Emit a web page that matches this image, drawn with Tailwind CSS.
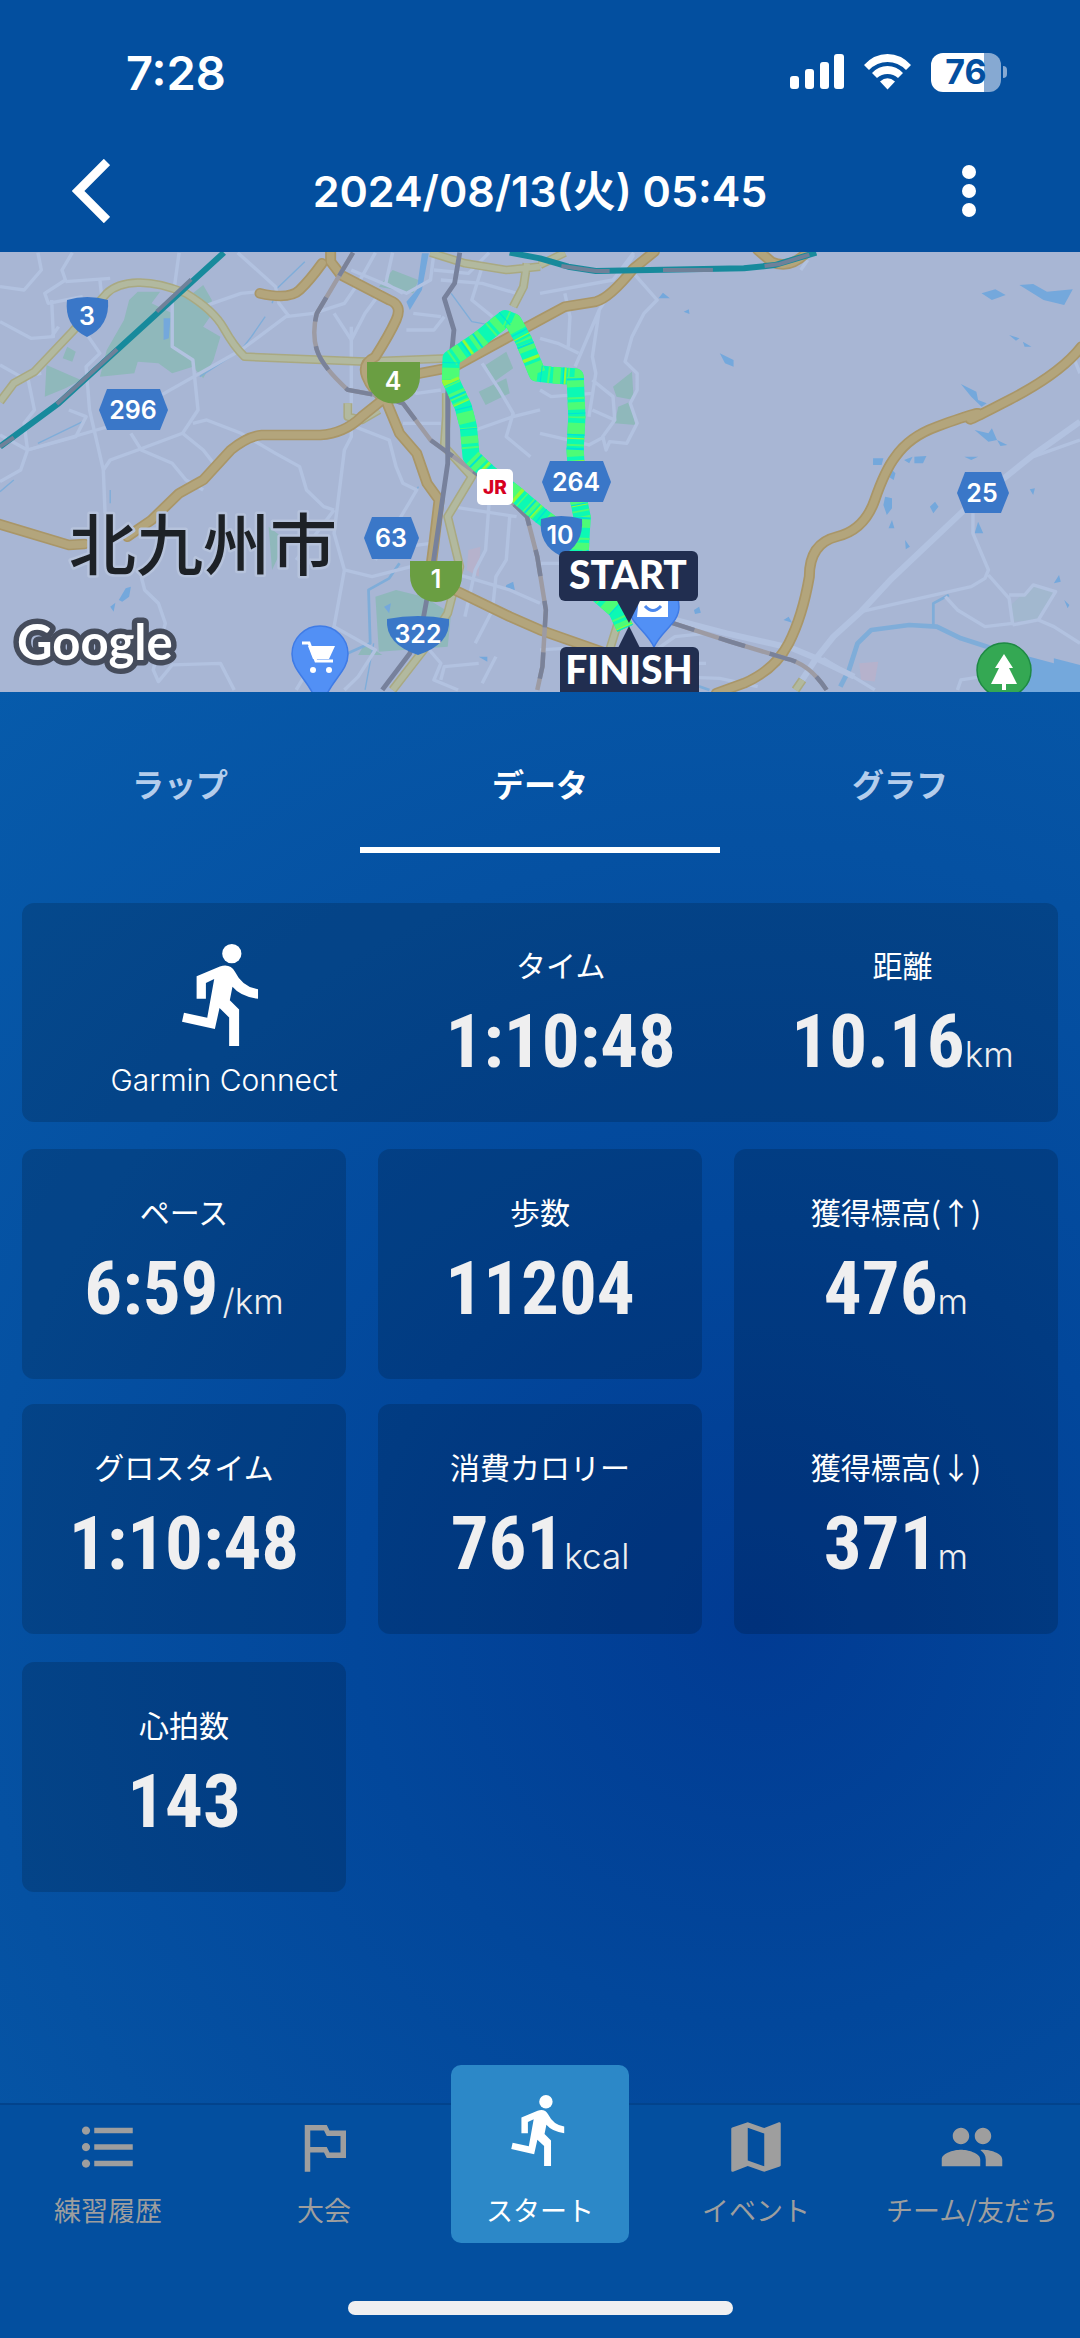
<!DOCTYPE html>
<html lang="ja">
<head>
    <meta charset="UTF-8">
    <meta name="viewport" content="width=device-width, initial-scale=1.0">
    <title>2024/08/13(火) 05:45</title>
    <script src="https://cdn.jsdelivr.net/npm/@tailwindcss/browser@4"></script>
</head>
<body class="min-h-screen flex flex-col bg-[#034f9f] text-white font-['Noto_Sans_CJK_JP',sans-serif]">

    <!-- Header -->
    <header>
        <div class="h-[144px] pl-[126px] pr-[73px] flex items-center justify-between">
            <p class="font-['Inter',sans-serif] text-[47px] leading-none font-semibold">7:28</p>
            <div class="flex items-center gap-5">
                <svg class="w-[54px] h-[36px]" viewBox="0 0 54 36" fill="#fff">
                    <rect x="0" y="22" width="9" height="13" rx="3"/>
                    <rect x="15" y="15" width="9" height="20" rx="3"/>
                    <rect x="30" y="8" width="9" height="27" rx="3"/>
                    <rect x="44" y="0" width="10" height="35" rx="3"/>
                </svg>
                <svg class="w-[47px] h-[36px]" viewBox="0 0 47 36" fill="#fff">
                    <path d="M0 11Q10 0 23.500 0T47 11L42 16Q34 8 23.500 8T5 16Z"/>
                    <path d="M8 19Q14.500 12 23.500 12T39 19L34 24Q29.500 20 23.500 20T13 24Z"/>
                    <path d="M16 27.500Q23.500 21 31 27.500L23.500 35.500Z"/>
                </svg>
                <div class="flex items-center gap-[2px]">
                    <div class="w-[70px] h-[39px] rounded-[12px] bg-[linear-gradient(90deg,#fff_76%,#86a9d2_76%)] flex items-center justify-center">
                        <span class="font-['Inter',sans-serif] text-[34px] leading-none font-bold text-[#034f9f]">76</span>
                    </div>
                    <div class="w-1 h-3 rounded-r-full bg-[#86a9d2]"></div>
                </div>
            </div>
        </div>
        <div class="h-[108px] pb-[14px] pl-[72px] pr-[104px] grid grid-cols-[38px_1fr_14px] items-center">
            <button type="button" aria-label="戻る">
                <svg class="w-[38px] h-[64px]" viewBox="0 0 38 64" fill="none" stroke="#fff" stroke-width="9"><path d="M35 3L6 32L35 61"/></svg>
            </button>
            <h1 class="font-['Inter','Noto_Sans_CJK_JP',sans-serif] text-[43px] leading-[52px] font-semibold text-center pl-2">2024/08/13(火) 05:45</h1>
            <button type="button" aria-label="メニュー">
                <svg class="w-[14px] h-[52px]" viewBox="0 0 14 52" fill="#fff"><circle cx="7" cy="7" r="7"/><circle cx="7" cy="26" r="7"/><circle cx="7" cy="45" r="7"/></svg>
            </button>
        </div>
    </header>

    <!-- Map -->
    <svg class="w-full block bg-[#a8b6d4]" viewBox="0 0 1080 440">
        <g transform="scale(.3444 .3333) translate(0 -6)" fill="none" stroke-linejoin="round">
            <!-- Parks -->
            <g fill="#8fb8bb">
                <path d="M400 125H465L440 160 500 190 510 110 560 130 590 105 615 150 610 200 590 230 640 260 620 330 590 385 560 350 500 370 460 340 400 335 390 370 290 380 310 300 360 210 375 150Z"/>
                <path d="M195 290L220 305 210 335 182 325ZM135 345L235 390 190 415 130 440ZM1140 60L1215 90 1200 130 1100 110ZM1410 345L1470 305 1490 355 1435 395ZM1390 425L1470 385 1480 430 1410 465Z"/>
                <path d="M1090 1040L1150 1020 1230 1040 1310 1090 1300 1190 1100 1205ZM1060 1180L1110 1215 1040 1215ZM780 830L830 870 790 960Z"/>
                <path d="M1780 410L1835 365 1840 450 1790 440ZM1795 470L1830 455 1845 525 1785 520Z"/>
            </g>
            <path d="M2935 1065L3000 1005 3065 1025 3015 1110 2945 1115Z" fill="#a2b8cf"/>
            <path d="M1360 900L1395 890 1390 980 1355 960ZM2495 1240L2550 1235 2540 1295 2500 1290Z" fill="#b6b2cc"/>

            <!-- Water -->
            <g fill="#74a8dc">
                <path d="M2850 130L2890 118 2920 135 2880 150ZM2960 105L3000 102 3040 125 3115 118 3090 165 3030 150ZM2930 255L2960 265 2950 272ZM2970 275L2995 290 2975 290ZM2090 310L2130 330 2130 350 2105 340ZM2790 402L2835 425 2840 450 2865 460 2850 470 2820 440ZM2830 540L2870 550 2880 535 2895 570 2870 575ZM2895 570L2925 585 2905 588ZM2800 620H2840L2820 630ZM2535 625H2565L2560 645H2535ZM2625 630L2650 620 2640 640ZM2655 620L2690 618 2680 640H2655ZM2585 655L2600 670 2595 690 2580 680ZM2570 740L2590 745 2590 775 2575 795 2565 765ZM2700 770L2715 755 2725 770 2710 790ZM2830 850L2840 815 2855 850ZM2628 870L2642 890 2630 898ZM2580 835L2590 810 2597 835ZM3060 1000L3075 975 3080 995ZM3090 1050L3105 1065 3100 1075ZM2015 1080L2030 1070 2035 1088 2018 1092ZM2275 1110L2290 1100 2300 1118ZM2990 718L3005 715 3000 735ZM1912 145L1925 128 1945 145ZM1985 185L2000 178 2002 192ZM475 205L495 205 490 265 475 270ZM345 1050L365 1015 380 1010 375 1040 355 1055ZM320 1070L335 1058 330 1085ZM1225 10H1245L1225 120 1190 180 1180 155 1210 120ZM1470 1005L1490 995 1495 1020 1468 1015ZM1390 1220L1415 1220 1415 1235ZM1115 1070L1135 1060 1130 1090Z"/>
                <path d="M2970 1215L3060 1240 3060 1225 3136 1245V1330H2960Z"/>
            </g>
            <g stroke="#7fadd9">
                <path d="M2440 1310L2465 1260 2490 1180 2530 1140 2640 1125 2720 1130 2790 1165 2880 1195" stroke-width="14"/>
                <path d="M2710 1130V1060L2755 1035M1160 940L1130 985 1070 1020 1075 1180 1010 1210M1870 1285L1990 1295 2060 1320" stroke-width="8"/>
                <path d="M885 35L805 115 790 160M770 200L730 260 700 300 580 380M1215 710L1150 830M0 725L40 690M110 580L240 515M1310 130L1370 215 1450 230M1085 1180L1060 1320M320 720V760" stroke-width="4"/>
            </g>

            <!-- Streets -->
            <g stroke="#b2c2e0" stroke-width="10">
                <path d="M0 110L70 120 120 60 110 8M210 8L180 60 190 90 130 130 140 160 240 140M190 95L320 85M150 150L155 260 90 265 0 215M150 260L170 230M0 345L60 380 120 370M80 380L100 480 70 520 80 600 60 660 0 695M0 555L80 600 220 560 250 500 200 480M240 150L250 250 290 310 250 350 260 480 300 660 305 790"/>
                <path d="M290 90L300 180M520 8L500 160V290L560 330 575 480 530 550 400 600 320 630 300 660M380 550L410 600 500 640 540 690 590 720M80 600L380 510 460 440 700 300 830 200 910 190M530 550L590 600 620 640M560 520L600 510 700 550 800 610 870 650 890 720 940 770 970 780M590 170L700 130 750 125M690 8L800 110 810 160 840 200"/>
                <path d="M1020 230V560L1000 600 970 850 1000 960 970 1130 860 1320M1000 960L1080 980 1230 940 1350 980 1480 1020 1568 1060M860 930L970 780M410 980L420 1020 460 1060 480 1120 445 1260 460 1295 500 1245 640 1240 680 1320M1030 530L1130 570 1150 650 1170 700 1210 720 1090 930M970 1130L1090 1200 1040 1280 1000 1320"/>
                <path d="M910 190L1000 160 1040 100 1090 8M970 190L1020 270 1060 190 1110 120M1020 60L1180 130 1250 90 1260 8M1140 8L1120 100 1170 130M1200 190L1280 200M1280 90L1400 100 1500 130M1260 60L1360 70 1420 8M1400 50L1370 150 1430 200M1400 340L1450 420 1490 490 1470 560 1540 620M1180 240L1260 240 1290 200M1120 330L1210 430 1280 420M1170 520L1280 520M1490 500L1380 540M1490 500L1568 480M1420 760L1410 900 1380 960 1350 1100M1480 800L1470 930 1440 980 1430 1080 1380 1180M1250 880L1180 890M1310 770L1500 800M1230 1180L1280 1240 1260 1290 1330 1320M1390 1240L1290 1250 1280 1290M1440 1220L1400 1300"/>
                <path d="M1568 130L1780 90 1840 8M1840 70L1908 150 1870 190 1835 260 1815 335 1850 370V420L1830 460 1850 520 1820 580 1770 575 1760 600 1750 560 1785 510 1780 440 1720 390M1740 180L1720 320 1730 370 1710 500M1840 15L1740 180 1670 350M1640 130L1655 200 1650 290M1568 265L1620 280 1680 310M1568 420L1600 440 1720 430M1720 480L1785 510M1568 550L1650 570 1710 585 1755 560M1568 940H1640M1568 1200L1640 1195M2390 1225L2540 1320M1890 1210L1960 1160 2050 1150M2050 1240H2010V1320M1840 1280L1950 1280 2090 1285 2200 1310"/>
                <path d="M2325 60L2345 30M3120 330L3136 370M3136 570L3000 620"/>
                <path d="M3136 515L3000 615 2800 780 2590 985 2500 1085 2420 1160 2370 1225 2310 1320M1960 1110L2110 1150 2300 1195 2370 1225 2480 1280" stroke-width="18"/>
                <path d="M2825 790V850L2870 960 2860 985 2820 1010 2500 1085M2870 975L2930 1045 2940 1120 2860 1130 2780 1080 2745 1040M2930 1035L2975 1035 3000 1005 3065 1025 3015 1110 2940 1125M3015 1110L3060 1130 3136 1180M2780 1320L2790 1290 2850 1280"/>
            </g>

            <!-- Main roads -->
            <g stroke="#a9a982" stroke-width="26">
                <path id="road-a" d="M0 455L40 400 100 365 210 245 310 130Q340 100 400 98T540 130Q620 180 650 235T710 320L1060 335 1300 325"/>
                <path id="road-b" d="M1250 8L1350 40 1470 60 1568 50M1530 40L1520 110 1490 170M1296 430V500L1290 590 1370 680 1300 800 1335 950 1300 1090 1230 1200 1140 1320M1100 480L1050 510 1010 500V460M1568 45L1640 8M1800 1100L1770 1200M2310 1320L2330 1290"/>
            </g>
            <g stroke="#b2b99f" stroke-width="17">
                <use href="#road-a"/>
                <use href="#road-b"/>
            </g>
            <g stroke="#a99668" stroke-width="32" stroke-linecap="round">
                <path id="gold" d="M755 130Q840 150 870 120T935 40M960 0V35L990 75 1130 150Q1170 165 1150 210T1090 320Q1050 340 1065 380T1120 450M1220 370L1320 350 1568 210 1640 170 1730 155Q1770 145 1840 55L1900 5M2200 0L2240 35Q2290 60 2340 10M-10 820L200 885 245 882M370 860L440 810 520 730 590 690 670 600Q720 558 760 555H930Q1000 550 1050 500L1110 450M1120 450L1160 550 1210 610 1240 700 1275 750 1260 880 1250 960M1320 1020L1480 1100 1568 1140 1760 1210"/>
                <path id="gold-b" d="M3140 290Q3080 370 2930 450T2830 500 2720 530Q2640 560 2600 620 2570 660 2540 750T2430 860 2350 980Q2330 1100 2290 1180T2160 1300L2080 1330"/>
            </g>
            <g stroke="#b3a57c" stroke-width="22" stroke-linecap="round">
                <use href="#gold"/>
                <use href="#gold-b"/>
            </g>

            <!-- Railways -->
            <g stroke="#9d9ba3" stroke-width="13">
                <path id="rail" d="M1025 8L920 190Q905 250 920 300T1010 420L1090 435 1170 460 1250 570 1370 660 1450 720 1530 800 1560 920 1585 1080 1575 1250 1560 1320M1940 1115L2120 1175 2280 1225Q2350 1240 2400 1320"/>
            </g>
            <g stroke="#7a8299" stroke-width="13" stroke-dasharray="80 75">
                <use href="#rail"/>
            </g>
            <path d="M1335 8L1320 100 1290 145 1318 240 1300 430V640L1255 960 1230 1100 1190 1210 1110 1320" stroke="#77819c" stroke-width="14"/>
            <path d="M0 590L170 460 650 8M1480 8L1568 25 1650 50 1730 63 2160 55 2250 45 2370 8" stroke="#178a9c" stroke-width="18"/>
            <path d="M0 590L40 562M165 462L340 298M455 185L555 88M1630 48L1730 63H1770M1925 60H2070M2220 48L2260 43 2350 14" stroke="#6f8199" stroke-width="12"/>

            <!-- Run track -->
            <g stroke="#0cf9b4" stroke-width="50">
                <path id="track" d="M1815 1135L1790 1080 1700 1000 1685 900 1690 800 1678 740 1670 600 1675 500 1670 380 1600 375 1560 370 1520 270 1490 215 1467 205 1390 270 1310 325 1308 390 1345 470 1360 530 1368 620 1420 670 1500 735 1568 795 1650 860 1690 920"/>
            </g>
            <g stroke="#4dfc77" stroke-width="50" stroke-dasharray="22 9 6 30 34 14 5 21"><use href="#track"/></g>
            <g stroke="#94fb35" stroke-width="50" stroke-dasharray="7 120 10 64 4 210"><use href="#track"/></g>
            <g stroke="#00e3d6" stroke-width="50" stroke-dasharray="4 61 3 98 6 37"><use href="#track"/></g>
        </g>

        <!-- Place pins -->
        <g stroke="#3f7be6" stroke-width="1.500">
            <path d="M320 374a28 28 0 0 1 28 28c0 16-14 24-22 42h-12c-8-18-22-26-22-42a28 28 0 0 1 28-28z" fill="#5290f5"/>
            <path d="M654 330a25 25 0 0 1 25 25c0 16-18 24-25 40c-7-16-25-24-25-40a25 25 0 0 1 25-25z" fill="#5290f5"/>
            <circle cx="1004" cy="418" r="27" fill="#34a853" stroke="#1d8943"/>
        </g>
        <path d="M302 391h7l7 18h17" fill="none" stroke="#fff" stroke-width="3"/>
        <path d="M308 394h27l-6 13h-16z" fill="#fff"/>
        <circle cx="313" cy="418" r="3" fill="#fff"/><circle cx="329" cy="418" r="3" fill="#fff"/>
        <path d="M639 345h29v20h-31z" fill="#fff"/>
        <path d="M645 354q8 9 16 0" fill="none" stroke="#4a87ee" stroke-width="3"/>
        <path d="M1004 402l9 14h-4l8 16h-11v6h-4v-6h-11l8-16h-4z" fill="#fff"/>

        <!-- Route numbers -->
        <g fill="#3a77c8">
            <path d="M67 48q20-6 41 0q2 26-21 37q-23-11-20-37z"/>
            <path d="M107 137h53l8 21l-8 20h-53l-8-20z"/>
            <path d="M372 265h39l8 21l-8 21h-39l-8-21z"/>
            <path d="M387 367q31-6 62 0q2 25-31 36q-33-11-31-36z"/>
            <path d="M550 209h53l8 21l-8 20h-53l-8-20z"/>
            <path d="M541 267q20-6 41 0q2 26-21 37q-23-11-20-37z"/>
            <path d="M965 220h36l8 21l-8 20h-36l-8-20z"/>
        </g>
        <g fill="#6a9e42">
            <path d="M367 110h53v15a26.500 26.500 0 0 1-53 0z"/>
            <path d="M410 309h52v15a26 26 0 0 1-52 0z"/>
        </g>
        <g class="font-['Inter',sans-serif] text-[25px] font-semibold" fill="#fff" text-anchor="middle">
            <text x="87" y="73">3</text>
            <text x="133" y="167">296</text>
            <text x="393" y="138">4</text>
            <text x="391" y="295">63</text>
            <text x="436" y="336">1</text>
            <text x="418" y="391">322</text>
            <text x="576" y="239">264</text>
            <text x="560" y="292">10</text>
            <text x="982" y="250">25</text>
        </g>
        <rect x="477" y="217" width="36" height="36" rx="5" fill="#fff"/>
        <text x="495" y="242" class="font-['Inter',sans-serif] text-[19px] font-extrabold" fill="#d7001f" text-anchor="middle">JR</text>

        <!-- City and map brand -->
        <text x="69" y="318" class="text-[67px] font-medium" fill="#1d2126" stroke="#b6c3dc" stroke-width="5" stroke-linejoin="round" paint-order="stroke">北九州市</text>
        <text x="17" y="408" class="font-['Lato',sans-serif] text-[49px] font-bold" fill="#fff" stroke="#454c5c" stroke-width="11" stroke-linejoin="round" paint-order="stroke">Google</text>

        <!-- Start and finish flags -->
        <g fill="#212e50">
            <rect x="559" y="299" width="139" height="50" rx="6"/>
            <path d="M617 349h23l-11 22z"/>
            <path d="M629 374l11 22h-22z"/>
            <rect x="560" y="395" width="139" height="50" rx="6"/>
        </g>
        <g class="font-['Lato',sans-serif] text-[39px] font-black" fill="#fff" text-anchor="middle">
            <text x="628" y="337">START</text>
            <text x="629" y="432">FINISH</text>
        </g>
    </svg>

    <!-- Workout data -->
    <main class="flex-1 bg-[radial-gradient(circle_at_70%_66%,#013b93_0,#02479b_400px,#0551a2_780px,#075cac_1250px)]">
        <nav class="grid grid-cols-3 text-[32px] leading-[48px] font-bold text-center">
            <a href="#lap" class="h-[161px] pt-[67px] text-[#b4cdec]">ラップ</a>
            <a href="#data" class="h-[161px] pt-[67px] border-b-6 border-white">データ</a>
            <a href="#graph" class="h-[161px] pt-[67px] text-[#b4cdec]">グラフ</a>
        </nav>

        <div class="px-[22px] pt-[50px] text-[30px] leading-[36px] font-normal">
            <section class="h-[219px] rounded-xl bg-black/16 grid grid-cols-[34fr_36fr_30fr]">
                <div class="pt-[41px] pl-[52px] flex flex-col items-center">
                    <svg class="w-[84px] h-[102px]" viewBox="248 71 253 307" fill="#fff">
                        <circle cx="398" cy="100" r="29"/>
                        <path d="M292 168L362 139Q392 128 408 155Q430 200 477 207V236Q425 230 400 200L392 240L420 268V378H390V292L361 264L347 327L248 305L254 278L324 293L345 176L320 188V236H292Z"/>
                    </svg>
                    <p class="mt-4 font-['Inter',sans-serif] font-light">Garmin Connect</p>
                </div>
                <div class="pt-[43px] flex flex-col items-center">
                    <h2>タイム</h2>
                    <p class="mt-[19px] font-['Roboto_Condensed',sans-serif] text-[75px] leading-[80px] font-bold text-[#efeff0]">1:10:48</p>
                </div>
                <div class="pt-[43px] flex flex-col items-center">
                    <h2>距離</h2>
                    <p class="mt-[19px] flex items-baseline font-['Roboto_Condensed',sans-serif] text-[75px] leading-[80px] font-bold text-[#efeff0]">10.16<span class="font-['Inter',sans-serif] text-[35px] leading-[36px] font-light">km</span></p>
                </div>
            </section>

            <div class="mt-[27px] grid grid-cols-3 grid-rows-[230px_230px] gap-x-8 gap-y-[25px]">
                <section class="rounded-xl bg-black/16 pt-[44px] flex flex-col items-center">
                    <h2>ペース</h2>
                    <p class="mt-[19px] flex items-baseline font-['Roboto_Condensed',sans-serif] text-[75px] leading-[80px] font-bold text-[#efeff0]">6:59<span class="pl-1 font-['Inter',sans-serif] text-[35px] leading-[36px] font-light">/km</span></p>
                </section>
                <section class="rounded-xl bg-black/16 pt-[44px] flex flex-col items-center">
                    <h2>歩数</h2>
                    <p class="mt-[19px] font-['Roboto_Condensed',sans-serif] text-[75px] leading-[80px] font-bold text-[#efeff0]">11204</p>
                </section>
                <section class="row-span-2 rounded-xl bg-black/16 grid grid-rows-2 gap-y-[25px]">
                    <div class="pt-[44px] flex flex-col items-center">
                        <h2>獲得標高(↑)</h2>
                        <p class="mt-[19px] flex items-baseline font-['Roboto_Condensed',sans-serif] text-[75px] leading-[80px] font-bold text-[#efeff0]">476<span class="font-['Inter',sans-serif] text-[35px] leading-[36px] font-light">m</span></p>
                    </div>
                    <div class="pt-[44px] flex flex-col items-center">
                        <h2>獲得標高(↓)</h2>
                        <p class="mt-[19px] flex items-baseline font-['Roboto_Condensed',sans-serif] text-[75px] leading-[80px] font-bold text-[#efeff0]">371<span class="font-['Inter',sans-serif] text-[35px] leading-[36px] font-light">m</span></p>
                    </div>
                </section>
                <section class="rounded-xl bg-black/16 pt-[44px] flex flex-col items-center">
                    <h2>グロスタイム</h2>
                    <p class="mt-[19px] font-['Roboto_Condensed',sans-serif] text-[75px] leading-[80px] font-bold text-[#efeff0]">1:10:48</p>
                </section>
                <section class="rounded-xl bg-black/16 pt-[44px] flex flex-col items-center">
                    <h2>消費カロリー</h2>
                    <p class="mt-[19px] flex items-baseline font-['Roboto_Condensed',sans-serif] text-[75px] leading-[80px] font-bold text-[#efeff0]">761<span class="font-['Inter',sans-serif] text-[35px] leading-[36px] font-light">kcal</span></p>
                </section>
            </div>

            <div class="mt-7 grid grid-cols-3 gap-x-8">
                <section class="h-[230px] rounded-xl bg-black/16 pt-[44px] flex flex-col items-center">
                    <h2>心拍数</h2>
                    <p class="mt-[19px] font-['Roboto_Condensed',sans-serif] text-[75px] leading-[80px] font-bold text-[#efeff0]">143</p>
                </section>
            </div>
        </div>
    </main>

    <!-- Bottom navigation -->
    <footer class="border-t-2 border-[#02438c] bg-[#034f9f] pb-[23px]">
        <nav class="grid grid-cols-5 items-start justify-items-center text-[27px] leading-[36px] text-[#9e9e9e]">
            <a href="#history" class="pt-[9px] flex flex-col items-center gap-3">
                <svg class="w-[66px] h-[66px]" viewBox="0 0 24 24" fill="currentColor"><path d="M4 10.500c-.83 0-1.500.67-1.500 1.500s.67 1.500 1.500 1.500 1.500-.67 1.500-1.500-.67-1.500-1.500-1.500zm0-6c-.83 0-1.500.67-1.500 1.500S3.170 7.500 4 7.500 5.500 6.830 5.500 6 4.830 4.500 4 4.500zm0 12c-.83 0-1.500.68-1.500 1.500s.68 1.500 1.500 1.500 1.500-.68 1.500-1.500-.67-1.500-1.500-1.500zM7 19h14v-2H7v2zm0-6h14v-2H7v2zm0-8v2h14V5H7z"/></svg>
                <span>練習履歴</span>
            </a>
            <a href="#race" class="pt-[9px] flex flex-col items-center gap-3">
                <svg class="w-[66px] h-[66px]" viewBox="0 0 24 24" fill="currentColor" fill-rule="evenodd"><path d="M5 4h8l1 2h6v10h-7l-1-2H7v7H5zM7 6v6h6l1 2h4V8h-5l-1-2z"/></svg>
                <span>大会</span>
            </a>
            <a href="#start" class="-mt-10 w-[178px] h-[178px] rounded-[10px] bg-[#2c88c8] pt-[30px] flex flex-col items-center gap-[26px] text-white">
                <svg class="w-[59px] h-[71px]" viewBox="248 71 253 307" fill="currentColor">
                    <circle cx="398" cy="100" r="29"/>
                    <path d="M292 168L362 139Q392 128 408 155Q430 200 477 207V236Q425 230 400 200L392 240L420 268V378H390V292L361 264L347 327L248 305L254 278L324 293L345 176L320 188V236H292Z"/>
                </svg>
                <span>スタート</span>
            </a>
            <a href="#event" class="pt-[9px] flex flex-col items-center gap-3">
                <svg class="w-[66px] h-[66px]" viewBox="0 0 24 24" fill="currentColor"><path d="M20.500 3l-.16.03L15 5.100 9 3 3.360 4.900c-.21.07-.36.25-.36.48V20.500c0 .28.22.5.5.5l.16-.03L9 18.900l6 2.100 5.640-1.900c.21-.07.36-.25.36-.48V3.500c0-.28-.22-.5-.5-.5zM15 19l-6-2.110V5l6 2.110V19z"/></svg>
                <span>イベント</span>
            </a>
            <a href="#team" class="pt-[9px] flex flex-col items-center gap-3">
                <svg class="w-[66px] h-[66px]" viewBox="0 0 24 24" fill="currentColor"><path d="M16 11c1.660 0 2.990-1.340 2.990-3S17.660 5 16 5c-1.660 0-3 1.340-3 3s1.340 3 3 3zm-8 0c1.660 0 2.990-1.340 2.990-3S9.660 5 8 5C6.340 5 5 6.340 5 8s1.340 3 3 3zm0 2c-2.330 0-7 1.170-7 3.500V19h14v-2.500c0-2.330-4.670-3.500-7-3.500zm8 0c-.29 0-.62.02-.97.05 1.160.84 1.970 1.970 1.970 3.450V19h6v-2.500c0-2.330-4.670-3.500-7-3.500z"/></svg>
                <span>チーム/友だち</span>
            </a>
        </nav>
        <div class="mx-auto mt-[58px] w-[385px] h-[14px] rounded-full bg-[#efeff1]"></div>
    </footer>

</body>
</html>
